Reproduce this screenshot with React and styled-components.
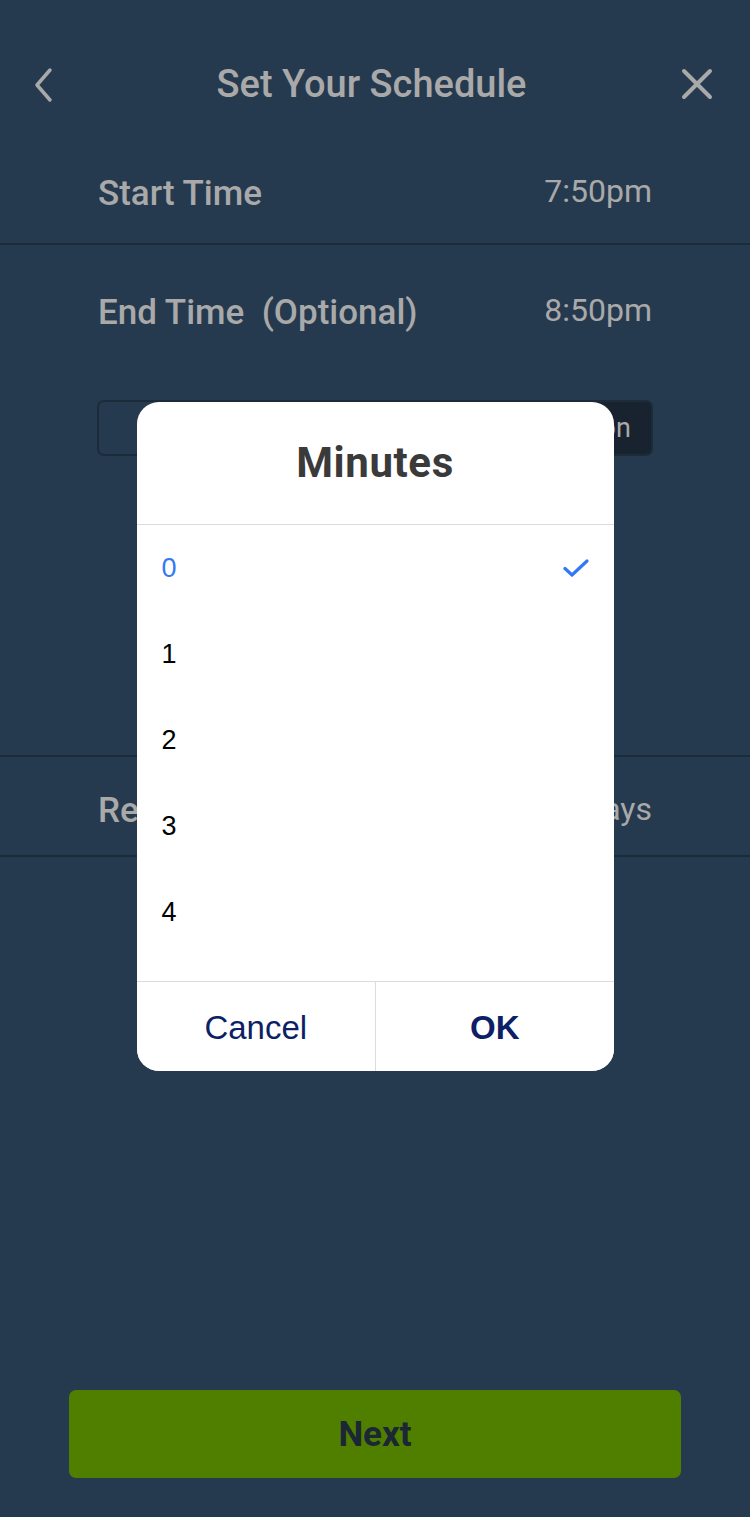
import React from "react"
import styled, { createGlobalStyle } from "styled-components"

const GlobalStyle = createGlobalStyle`
  html, body {
    margin: 0;
    padding: 0;
    background: #263a4f;
  }
  * {
    box-sizing: border-box;
  }
`

const colors = {
  bg: "#263a4f",
  text: "#a9a9a9",
  line: "#1c2b3a",
  dark: "#18232f",
  navy: "#0d1f66",
  blue: "#3478f6",
}

const Screen = styled.div`
  position: relative;
  width: 750px;
  height: 1517px;
  background: ${colors.bg};
  font-family: Roboto, "Liberation Sans", sans-serif;
  color: ${colors.text};
  display: flex;
  flex-direction: column;
  overflow: hidden;
`

const Header = styled.header`
  height: 140px;
  display: grid;
  grid-template-columns: 1fr auto 1fr;
  align-items: center;
  align-content: start;
  padding: 64px 37px 0 30px;
  h1 {
    margin: 0;
    font-size: 38px;
    font-weight: 500;
    line-height: 40px;
    color: ${colors.text};
  }
  svg {
    display: block;
  }
  svg:last-child {
    justify-self: end;
  }
`

const Row = styled.div`
  height: ${p => p.h}px;
  display: flex;
  justify-content: space-between;
  align-items: center;
  padding: ${p => p.top || 0}px 98px 0;
  border-bottom: ${p => (p.line ? `2px solid ${colors.line}` : "none")};
  .label {
    font-size: 35px;
    font-weight: 500;
    white-space: pre;
  }
  .value {
    font-size: 32px;
    font-weight: 400;
    margin-top: ${p => p.valueShift || 0}px;
  }
`

const Segmented = styled.div`
  margin: 25px 97px 0;
  height: 56px;
  display: flex;
  border: 2px solid ${colors.line};
  border-radius: 7px;
  overflow: hidden;
`

const Segment = styled.div`
  flex: ${p => (p.active ? "0 0 142px" : "1")};
  display: flex;
  align-items: center;
  justify-content: center;
  font-size: 27px;
  background: ${p => (p.active ? colors.dark : "transparent")};
  color: ${colors.text};
`

const Spacer = styled.div`
  height: ${p => p.h}px;
  border-bottom: ${p => (p.line ? `2px solid ${colors.line}` : "none")};
`

const Footer = styled.div`
  margin-top: auto;
  padding: 0 69px 39px;
`

const NextButton = styled.button`
  width: 100%;
  height: 88px;
  border: none;
  border-radius: 7px;
  background: #507f00;
  color: #1b2735;
  font-family: Roboto, sans-serif;
  font-size: 35px;
  font-weight: 700;
`

const Overlay = styled.div`
  position: absolute;
  inset: 0;
  display: flex;
  justify-content: center;
  align-items: flex-start;
  padding-top: 402px;
`

const Dialog = styled.div`
  width: 477px;
  background: #fff;
  border-radius: 22px;
  overflow: hidden;
  display: flex;
  flex-direction: column;
`

const DialogTitle = styled.h2`
  margin: 0;
  height: 123px;
  display: flex;
  align-items: center;
  justify-content: center;
  border-bottom: 1px solid #dcdcdc;
  font-family: Roboto, sans-serif;
  font-size: 42px;
  font-weight: 700;
  letter-spacing: 0.6px;
  color: #3a3a3a;
  padding-bottom: 1px;
`

const List = styled.ul`
  list-style: none;
  margin: 0;
  padding: 0;
  height: 457px;
  overflow: hidden;
  border-bottom: 1px solid #dcdcdc;
`

const Item = styled.li`
  height: 86px;
  display: flex;
  align-items: center;
  justify-content: space-between;
  padding: 0 25px;
  font-family: "Liberation Sans", Arial, sans-serif;
  font-size: 27px;
  color: ${p => (p.selected ? colors.blue : "#000")};
`

const Actions = styled.div`
  height: 89px;
  display: grid;
  grid-template-columns: 1fr 1fr;
`

const Action = styled.button`
  border: none;
  background: #fff;
  padding: 2px 0 0;
  font-family: "Liberation Sans", Arial, sans-serif;
  font-size: 33px;
  font-weight: ${p => (p.bold ? 700 : 400)};
  color: ${colors.navy};
  & + & {
    border-left: 1px solid #dcdcdc;
  }
`

const Check = () => (
  <svg width="26" height="20" viewBox="0 0 26 20" fill="none">
    <path d="M2 10.5 L9 17 L24 3" stroke={colors.blue} strokeWidth="3.2" strokeLinecap="round" strokeLinejoin="round" />
  </svg>
)

const minutes = [0, 1, 2, 3, 4]

export default function App() {
  return (
    <>
      <GlobalStyle />
      <Screen>
        <Header>
          <svg width="28" height="40" viewBox="0 0 28 40">
            <path d="M20 6 L7 21 L20 36" stroke={colors.text} strokeWidth="3.5" fill="none" strokeLinecap="round" strokeLinejoin="round" />
          </svg>
          <h1>Set Your Schedule</h1>
          <svg width="32" height="32" viewBox="0 0 32 32">
            <path d="M3 3 L29 29 M29 3 L3 29" stroke={colors.text} strokeWidth="4" strokeLinecap="round" />
          </svg>
        </Header>
        <Row h={105} top={4} line valueShift={-6}>
          <span className="label">Start Time</span>
          <span className="value">7:50pm</span>
        </Row>
        <Row h={130} top={4} valueShift={-4}>
          <span className="label">End Time  (Optional)</span>
          <span className="value">8:50pm</span>
        </Row>
        <Segmented>
          <Segment>End Time</Segment>
          <Segment active>Duration</Segment>
        </Segmented>
        <Spacer h={301} line />
        <Row h={100} top={8} line valueShift={-2}>
          <span className="label">Repeat</span>
          <span className="value">Weekdays</span>
        </Row>
        <Footer>
          <NextButton>Next</NextButton>
        </Footer>
        <Overlay>
          <Dialog>
            <DialogTitle>Minutes</DialogTitle>
            <List>
              {minutes.map(m => (
                <Item key={m} selected={m === 0}>
                  <span>{m}</span>
                  {m === 0 && <Check />}
                </Item>
              ))}
            </List>
            <Actions>
              <Action>Cancel</Action>
              <Action bold>OK</Action>
            </Actions>
          </Dialog>
        </Overlay>
      </Screen>
    </>
  )
}
